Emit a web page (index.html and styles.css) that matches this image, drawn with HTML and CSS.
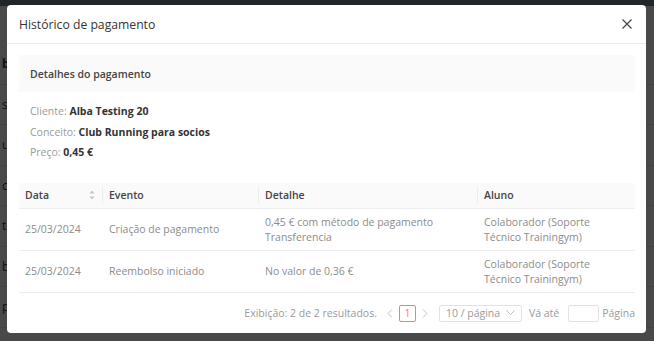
FILE: index.html
```html
<!DOCTYPE html>
<html lang="pt">
<head>
<meta charset="utf-8">
<title>Histórico de pagamento</title>
<link rel="stylesheet" href="styles.css">
</head>
<body>
<div class="page">
  <div class="topbar"></div>
  <div class="bg-rows">
    <div class="bg-row bold">bb</div>
    <div class="bg-row">st</div>
    <div class="bg-row">u</div>
    <div class="bg-row">c</div>
    <div class="bg-row">ta</div>
    <div class="bg-row">b</div>
    <div class="bg-row">pe</div>
  </div>
</div>
<div class="overlay"></div>
<div class="modal">
  <div class="modal-header">
    <h1 class="modal-title">Histórico de pagamento</h1>
    <button class="close" aria-label="Fechar">
      <svg width="10" height="10" viewBox="0 0 10 10"><path d="M0.5 0.5L9.5 9.5M9.5 0.5L0.5 9.5" stroke="#444" stroke-width="1.2" fill="none"/></svg>
    </button>
  </div>
  <div class="modal-body">
    <div class="details-box">Detalhes do pagamento</div>
    <div class="info">
      <p><span class="lbl">Cliente:</span> <b>Alba Testing 20</b></p>
      <p><span class="lbl">Conceito:</span> <b>Club Running para socios</b></p>
      <p><span class="lbl">Preço:</span> <b>0,45 €</b></p>
    </div>
    <table class="tbl">
      <thead>
        <tr>
          <th class="c-data"><div class="th-in">Data<span class="sorter"><svg width="6" height="10" viewBox="0 0 6 10"><path d="M3 0.5L5.5 3.5H0.5Z" fill="#c4c4c4"/><path d="M3 9.5L5.5 6.5H0.5Z" fill="#c4c4c4"/></svg></span></div></th>
          <th class="c-ev"><div class="th-in">Evento</div></th>
          <th class="c-det"><div class="th-in">Detalhe</div></th>
          <th class="c-al"><div class="th-in last">Aluno</div></th>
        </tr>
      </thead>
      <tbody>
        <tr>
          <td>25/03/2024</td>
          <td>Criação de pagamento</td>
          <td>0,45 € com método de pagamento Transferencia</td>
          <td>Colaborador (Soporte Técnico Trainingym)</td>
        </tr>
        <tr>
          <td>25/03/2024</td>
          <td>Reembolso iniciado</td>
          <td>No valor de 0,36 €</td>
          <td>Colaborador (Soporte Técnico Trainingym)</td>
        </tr>
      </tbody>
    </table>
    <div class="pager">
      <span class="total">Exibição: 2 de 2 resultados.</span>
      <span class="arrow">
        <svg width="6" height="9" viewBox="0 0 6 9"><path d="M5 0.5L1 4.5L5 8.5" stroke="#c0c0c0" fill="none"/></svg>
      </span>
      <span class="page-item">1</span>
      <span class="arrow">
        <svg width="6" height="9" viewBox="0 0 6 9"><path d="M1 0.5L5 4.5L1 8.5" stroke="#c0c0c0" fill="none"/></svg>
      </span>
      <span class="size-select">10 / página
        <svg width="9" height="6" viewBox="0 0 9 6"><path d="M0.5 0.5L4.5 4.5L8.5 0.5" stroke="#bdbdbd" fill="none"/></svg>
      </span>
      <span class="goto">Vá até</span>
      <span class="goto-input"></span>
      <span class="goto">Página</span>
    </div>
  </div>
</div>
</body>
</html>
```
FILE: styles.css
```css
* { box-sizing: border-box; }
html, body { margin: 0; padding: 0; }
body {
  width: 654px;
  height: 341px;
  overflow: hidden;
  position: relative;
  font-family: "Open Sans", "Noto Sans", sans-serif;
  background: #fff;
}
.page {
  width: 654px;
  height: 341px;
  background: #f4f4f4;
}
.topbar {
  height: 6px;
  background: #6a8296;
}
.bg-rows {
  padding-top: 38px;
}
.bg-row {
  height: 40.5px;
  border-bottom: 1px solid #ddd;
  font-size: 12px;
  line-height: 40px;
  color: #333;
  padding-left: 2px;
}
.bg-row.bold { font-weight: 700; }
.overlay {
  position: absolute;
  inset: 0;
  background: rgba(0, 0, 0, 0.7);
}
.modal {
  position: absolute;
  left: 7px;
  top: 5px;
  width: 639px;
  height: 328px;
  background: #fff;
  border-radius: 4px;
  overflow: hidden;
}
.modal-header {
  height: 39px;
  border-bottom: 1px solid #ececec;
  display: flex;
  align-items: center;
  justify-content: space-between;
  padding: 0 14px 0 12px;
}
.modal-title {
  margin: 0;
  font-size: 12.2px;
  font-weight: 400;
  color: #333;
}
.close {
  border: 0;
  background: none;
  padding: 0;
  width: 10px;
  height: 10px;
  display: flex;
}
.modal-body {
  padding: 11px 11px 0 12px;
}
.details-box {
  background: #fafafa;
  height: 37px;
  display: flex;
  align-items: center;
  padding-left: 11px;
  font-size: 10.5px;
  font-weight: 600;
  color: #444;
}
.info {
  padding: 9px 0 0 11px;
}
.info p {
  margin: 0;
  height: 20.5px;
  line-height: 20px;
  font-size: 10.5px;
  color: #333;
}
.info .lbl { color: #9a9a9a; }
.info b { font-weight: 700; color: #333; }
.tbl {
  margin-top: 20px;
  width: 616px;
  border-collapse: collapse;
  table-layout: fixed;
  font-size: 10.5px;
}
.tbl th {
  background: #fafafa;
  height: 26px;
  padding: 0;
  text-align: left;
  font-weight: 600;
  color: #444;
  border-bottom: 1px solid #efefef;
}
.c-data { width: 84px; }
.c-ev { width: 156px; }
.c-det { width: 219px; }
.c-al { width: auto; }
.th-in {
  display: flex;
  align-items: center;
  justify-content: space-between;
  padding: 0 6px 0 6px;
  border-right: 1px solid #ececec;
  height: 16px;
}
.th-in.last { border-right: 0; }
.sorter { display: flex; margin-right: 1px; }
.tbl td {
  padding: 0 6px;
  height: 42px;
  color: #8c8c8c;
  line-height: 15px;
  border-bottom: 1px solid #ececec;
  vertical-align: middle;
}
.pager {
  display: flex;
  align-items: center;
  justify-content: flex-end;
  height: 40px;
  font-size: 10.5px;
  color: #9a9a9a;
}
.total { margin-right: 8px; }
.arrow { display: flex; align-items: center; width: 10px; justify-content: center; }
.page-item {
  width: 17px;
  height: 17px;
  border: 1px solid #f0884f;
  border-radius: 2px;
  color: #f0884f;
  display: flex;
  align-items: center;
  justify-content: center;
  margin: 0 4px;
}
.size-select {
  margin-left: 9px;
  height: 17px;
  width: 83px;
  border: 1px solid #e2e2e2;
  border-radius: 2px;
  display: flex;
  align-items: center;
  justify-content: space-between;
  padding: 0 6px 0 6px;
  font-size: 10.5px;
  color: #9a9a9a;
}
.goto { margin-left: 7px; }
.goto-input {
  width: 31px;
  height: 17px;
  border: 1px solid #e2e2e2;
  border-radius: 2px;
  margin-left: 9px;
  margin-right: -4px;
}
```
